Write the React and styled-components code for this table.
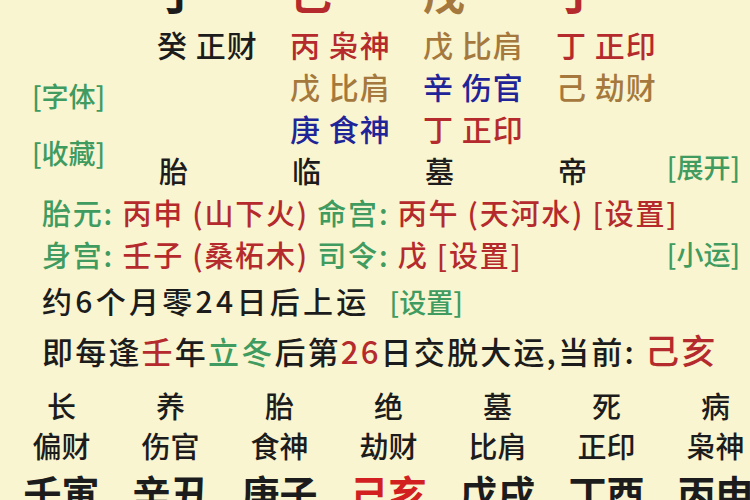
import styled, { createGlobalStyle } from "styled-components";

const GlobalStyle = createGlobalStyle`
  html, body {
    margin: 0;
    padding: 0;
    background: #f9f5d0;
  }
  body {
    font-family: "Noto Sans CJK SC", "Noto Sans", sans-serif;
    font-weight: 500;
  }
`;

const tones = {
  black: "#1c1c1c",
  red: "#b52a2c",
  brown: "#a5793d",
  blue: "#1f2598",
  green: "#3f9b60",
  bright: "#d21f1f",
};

const Page = styled.div`
  width: 750px;
  height: 500px;
  overflow: hidden;
  background: #f9f5d0;
  color: ${tones.black};
`;

const Top = styled.div`
  display: flex;
  margin-top: -29px;
`;

const Sidebar = styled.div`
  width: 150px;
  flex-shrink: 0;
  display: flex;
  flex-direction: column;
  align-items: flex-start;
  gap: 21px;
  padding: 107px 0 0 32px;
  box-sizing: border-box;
`;

const Link = styled.span`
  color: ${(p) => tones[p.tone || "green"]};
  font-size: ${(p) => p.size || 27}px;
  line-height: 36px;
  letter-spacing: 0;
  white-space: nowrap;
`;

const Pillars = styled.div`
  display: flex;
  flex: 1;
`;

const Pillar = styled.div`
  width: ${(p) => p.width || 133}px;
  flex-shrink: 0;
  display: flex;
  flex-direction: column;
  padding-left: 7px;
  box-sizing: border-box;
`;

const Stem = styled.div`
  font-size: 42px;
  line-height: 42px;
  font-weight: 700;
  margin-bottom: 10px;
  color: ${(p) => tones[p.tone]};
`;

const HiddenList = styled.div`
  height: 126px;
  display: flex;
  flex-direction: column;
`;

const HiddenRow = styled.div`
  font-size: 30px;
  line-height: 42px;
  letter-spacing: 1px;
  white-space: nowrap;
  color: ${(p) => tones[p.tone]};
`;

const Stage = styled.div`
  font-size: 29px;
  line-height: 42px;
  padding-left: 2px;
`;

const Aside = styled.div`
  flex: 1;
  display: flex;
  align-items: flex-end;
  justify-content: flex-end;
  padding: 0 10px 6px 0;
`;

const InfoRow = styled.div`
  display: flex;
  align-items: center;
  justify-content: space-between;
  padding: 0 10px 0 42px;
  margin-top: ${(p) => p.gap || 0}px;
  font-size: ${(p) => p.size || 29}px;
  line-height: ${(p) => p.height || 42}px;
  letter-spacing: ${(p) => (p.track !== undefined ? p.track : 1.8)}px;
  white-space: nowrap;
`;

const Part = styled.span`
  color: ${(p) => tones[p.tone || "black"]};
  font-size: ${(p) => (p.size ? `${p.size}px` : "inherit")};
  margin-left: ${(p) => p.push || 0}px;
  letter-spacing: ${(p) => (p.track !== undefined ? `${p.track}px` : "inherit")};
`;

const Cycle = styled.div`
  display: grid;
  grid-template-columns: repeat(7, 109px);
  padding-left: 7px;
  margin-top: ${(p) => p.gap || 0}px;
  font-size: ${(p) => p.size}px;
  line-height: ${(p) => p.height}px;
  font-weight: ${(p) => (p.bold ? 700 : 500)};
`;

const Cell = styled.div`
  text-align: center;
  white-space: nowrap;
  color: ${(p) => tones[p.tone || "black"]};
`;

const pillars = [
  { stem: "丁", tone: "black", hidden: [["癸 正财", "black"]], stage: "胎" },
  {
    stem: "己",
    tone: "red",
    hidden: [
      ["丙 枭神", "red"],
      ["戊 比肩", "brown"],
      ["庚 食神", "blue"],
    ],
    stage: "临",
  },
  {
    stem: "戊",
    tone: "brown",
    hidden: [
      ["戊 比肩", "brown"],
      ["辛 伤官", "blue"],
      ["丁 正印", "red"],
    ],
    stage: "墓",
  },
  {
    stem: "丁",
    tone: "red",
    hidden: [
      ["丁 正印", "red"],
      ["己 劫财", "brown"],
    ],
    stage: "帝",
    width: 110,
  },
];

const stages = ["长", "养", "胎", "绝", "墓", "死", "病"];
const gods = ["偏财", "伤官", "食神", "劫财", "比肩", "正印", "枭神"];
const luck = ["壬寅", "辛丑", "庚子", "己亥", "戊戌", "丁酉", "丙申"];

export default function App() {
  return (
    <Page>
      <GlobalStyle />
      <Top>
        <Sidebar>
          <Link>[字体]</Link>
          <Link>[收藏]</Link>
        </Sidebar>
        <Pillars>
          {pillars.map((p, i) => (
            <Pillar key={i} width={p.width}>
              <Stem tone={p.tone}>{p.stem}</Stem>
              <HiddenList>
                {p.hidden.map(([text, tone]) => (
                  <HiddenRow key={text} tone={tone}>
                    {text}
                  </HiddenRow>
                ))}
              </HiddenList>
              <Stage>{p.stage}</Stage>
            </Pillar>
          ))}
          <Aside>
            <Link>[展开]</Link>
          </Aside>
        </Pillars>
      </Top>

      <InfoRow>
        <span>
          <Part tone="green">胎元: </Part>
          <Part tone="red">丙申 (山下火) </Part>
          <Part tone="green">命宫: </Part>
          <Part tone="red">丙午 (天河水) [设置]</Part>
        </span>
      </InfoRow>
      <InfoRow>
        <span>
          <Part tone="green">身宫: </Part>
          <Part tone="red">壬子 (桑柘木) </Part>
          <Part tone="green">司令: </Part>
          <Part tone="red">戊 [设置]</Part>
        </span>
        <Link>[小运]</Link>
      </InfoRow>

      <InfoRow gap={4} size={30} track={3.3}>
        <span>
          约6个月零24日后上运
          <Part tone="green" size={27} push={20} track={0}>
            [设置]
          </Part>
        </span>
      </InfoRow>
      <InfoRow gap={4} size={31} height={46} track={2.2}>
        <span>
          即每逢<Part tone="red">壬</Part>年<Part tone="green">立冬</Part>后第
          <Part tone="red">26</Part>日交脱大运,当前:{" "}
          <Part tone="red" size={34}>
            己亥
          </Part>
        </span>
      </InfoRow>

      <Cycle gap={11} size={29} height={40}>
        {stages.map((s, i) => (
          <Cell key={i}>{s}</Cell>
        ))}
      </Cycle>
      <Cycle size={29} height={40}>
        {gods.map((g, i) => (
          <Cell key={i}>{g}</Cell>
        ))}
      </Cycle>
      <Cycle gap={7} size={38} height={40} bold>
        {luck.map((l, i) => (
          <Cell key={i} tone={l === "己亥" ? "bright" : "black"}>
            {l}
          </Cell>
        ))}
      </Cycle>
    </Page>
  );
}
